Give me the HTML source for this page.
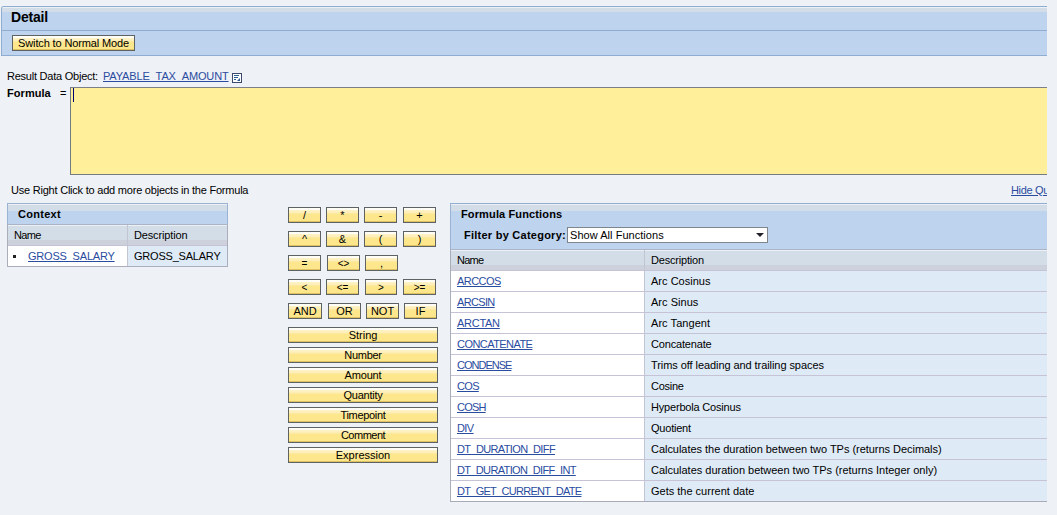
<!DOCTYPE html>
<html><head><meta charset="utf-8">
<style>
*{margin:0;padding:0;box-sizing:border-box}
html,body{width:1057px;height:515px;overflow:hidden;background:#eef1f6;font-family:"Liberation Sans",sans-serif;font-size:11px;line-height:13px;color:#000}
.a{position:absolute;white-space:nowrap}
.lnk{color:#2a4c9f;text-decoration:underline}
.b{font-weight:bold}
.box{position:absolute}
#detail{position:absolute;left:1px;top:6px;width:1046px;height:50px;border:1px solid #8eadd0;border-right:none;border-radius:3px 0 0 0;background:#bed3ee;overflow:hidden}
#detail .strip{position:absolute;left:0;top:0;right:0;height:5px;background:#d3dde8;border-top:1px solid #edf1f6}
#detail .sep{position:absolute;left:0;top:23px;right:0;height:1px;background:#8eadd0}
.btn{position:absolute;border:1px solid #5f6262;background:linear-gradient(#fffef6 0,#fffef6 2px,#fef2c6 2px,#fef0be 4px,#fdebb0 5px,#fde78e 6px,#fde68a 13px,#dcc262 13px,#dcc262 14px);text-align:center;font-size:11px;line-height:14px;height:16px;white-space:nowrap}
#formula{position:absolute;left:70px;top:87px;width:977px;height:88px;background:#ffee9a;border-top:1px solid #7a7f88;border-left:1px solid #737a82;border-bottom:1px solid #737a82}
.pstrip{position:absolute;left:0;right:0;top:0;height:7px;background:#d3dde8}
.colh{position:absolute;background:#d3dde8}
.colhd{position:absolute;background:#ccd1dc}
.vl{position:absolute;width:1px;background:#c2c6d3}
.hl{position:absolute;height:1px;background:#c6c3d6}
</style></head><body>

<div id="detail"><div class="strip"></div><div class="sep"></div></div>
<div class="a b" style="left:11px;top:9px;font-size:14px;line-height:16px;letter-spacing:-0.207px">Detail</div>
<div class="btn" style="left:12px;top:35px;width:123px;letter-spacing:-0.139px">Switch to Normal Mode</div>
<div class="a" style="left:7px;top:70px;letter-spacing:-0.234px">Result Data Object:</div>
<div class="a lnk" style="left:103px;top:70px;letter-spacing:-0.148px">PAYABLE_TAX_AMOUNT</div>
<svg class="a" style="left:232px;top:73px" width="10" height="10" viewBox="0 0 10 10"><rect x="0.5" y="0.5" width="9" height="9" fill="#fff" stroke="#3c4a70"/><rect x="2" y="2" width="5" height="1" fill="#2f6094"/><rect x="2" y="4" width="4" height="1" fill="#2f6094"/><rect x="2" y="6" width="2" height="1" fill="#2f6094"/><path d="M5 8H8V5z" fill="#2a5a90"/></svg>
<div class="a b" style="left:7px;top:87px;letter-spacing:0.054px">Formula</div>
<div class="a" style="left:60px;top:87px">=</div>
<div id="formula"></div>
<div class="a" style="left:73px;top:88px;width:1px;height:14px;background:#000070"></div>
<div class="a" style="left:11px;top:184px;letter-spacing:-0.219px">Use Right Click to add more objects in the Formula</div>
<div class="a" style="left:1011px;top:184px;width:36px;height:14px;overflow:hidden"><span class="lnk" style="letter-spacing:-0.35px">Hide Quick Help</span></div>

<div class="box" style="left:7px;top:203px;width:221px;height:64px;background:#bed3ee">
  <div class="box" style="left:0;top:0;width:221px;height:1px;background:#9ab3d2"></div>
  <div class="box" style="left:0;top:1px;width:1px;height:21px;background:#9ab3d2"></div>
  <div class="box" style="left:220px;top:1px;width:1px;height:21px;background:#9ab3d2"></div>
  <div class="box" style="left:1px;right:1px;top:1px;height:1px;background:#edf1f6"></div>
  <div class="box" style="left:1px;right:1px;top:2px;height:6px;background:#d3dde8"></div>
  <div class="box" style="left:0;right:0;top:21px;height:1px;background:#aab4c6"></div>
  <div class="box" style="left:1px;right:1px;top:22px;height:1px;background:#edf1f6"></div>
  <div class="colh" style="left:1px;right:1px;top:23px;height:14px"></div>
  <div class="colhd" style="left:1px;right:1px;top:37px;height:5px"></div>
  <div class="box" style="left:1px;width:119px;top:43px;height:20px;background:#fff"></div>
  <div class="box" style="left:121px;right:1px;top:43px;height:20px;background:#deeaf6"></div>
  <div class="hl" style="left:1px;right:1px;top:42px"></div>
  <div class="vl" style="left:120px;top:22px;height:41px"></div>
  <div class="box" style="left:0;top:22px;width:1px;height:42px;background:#aaaebb"></div>
  <div class="box" style="left:220px;top:22px;width:1px;height:42px;background:#aaaebb"></div>
  <div class="box" style="left:0;top:63px;width:221px;height:1px;background:#aaaebb"></div>
</div>
<div class="a b" style="left:18px;top:208px;letter-spacing:0.286px">Context</div>
<div class="a" style="left:14px;top:229px;letter-spacing:-0.675px">Name</div>
<div class="a" style="left:134px;top:229px;letter-spacing:-0.150px">Description</div>
<div class="a" style="left:13px;top:255px;width:3px;height:3px;background:#222"></div>
<div class="a lnk" style="left:28px;top:250px;letter-spacing:-0.205px">GROSS_SALARY</div>
<div class="a" style="left:134px;top:250px;letter-spacing:-0.211px">GROSS_SALARY</div>

<div class="btn" style="left:288px;top:207px;width:33px">/</div>
<div class="btn" style="left:326px;top:207px;width:33px">*</div>
<div class="btn" style="left:364px;top:207px;width:33px">-</div>
<div class="btn" style="left:403px;top:207px;width:33px">+</div>
<div class="btn" style="left:288px;top:231px;width:33px">^</div>
<div class="btn" style="left:326px;top:231px;width:33px">&amp;</div>
<div class="btn" style="left:364px;top:231px;width:33px">(</div>
<div class="btn" style="left:403px;top:231px;width:33px">)</div>
<div class="btn" style="left:288px;top:255px;width:33px;font-size:10px;padding-top:1px">=</div>
<div class="btn" style="left:327px;top:255px;width:33px;font-size:10px;padding-top:1px">&lt;&gt;</div>
<div class="btn" style="left:365px;top:255px;width:33px">,</div>
<div class="btn" style="left:288px;top:279px;width:33px;font-size:10px;padding-top:1px">&lt;</div>
<div class="btn" style="left:326px;top:279px;width:33px;font-size:10px;padding-top:1px">&lt;=</div>
<div class="btn" style="left:365px;top:279px;width:32px;font-size:10px;padding-top:1px">&gt;</div>
<div class="btn" style="left:403px;top:279px;width:33px;font-size:10px;padding-top:1px">&gt;=</div>
<div class="btn" style="left:288px;top:303px;width:34px">AND</div>
<div class="btn" style="left:328px;top:303px;width:33px">OR</div>
<div class="btn" style="left:366px;top:303px;width:33px">NOT</div>
<div class="btn" style="left:404px;top:303px;width:33px">IF</div>
<div class="btn" style="left:288px;top:327px;width:150px;letter-spacing:0px">String</div>
<div class="btn" style="left:288px;top:347px;width:150px;letter-spacing:-0.3px">Number</div>
<div class="btn" style="left:288px;top:367px;width:150px;letter-spacing:-0.15px">Amount</div>
<div class="btn" style="left:288px;top:387px;width:150px;letter-spacing:-0.25px">Quantity</div>
<div class="btn" style="left:288px;top:407px;width:150px;letter-spacing:-0.3px">Timepoint</div>
<div class="btn" style="left:288px;top:427px;width:150px;letter-spacing:-0.5px">Comment</div>
<div class="btn" style="left:288px;top:447px;width:150px;letter-spacing:0px">Expression</div>
<div class="box" style="left:450px;top:203px;width:597px;height:299px;background:#bed3ee">
  <div class="box" style="left:0;top:0;right:0;height:1px;background:#8eadd0"></div>
  <div class="box" style="left:0;top:1px;width:1px;height:46px;background:#9ab3d2"></div>
  <div class="box" style="left:1px;right:0;top:1px;height:1px;background:#edf1f6"></div>
  <div class="box" style="left:1px;right:0;top:2px;height:6px;background:#d3dde8"></div>
  <div class="box" style="left:0;right:0;top:46px;height:1px;background:#aab4c6"></div>
  <div class="box" style="left:1px;right:0;top:47px;height:1px;background:#edf1f6"></div>
  <div class="colh" style="left:1px;right:0;top:48px;height:14px"></div>
  <div class="colhd" style="left:1px;right:0;top:62px;height:5px"></div>
  <div class="box" style="left:1px;width:193px;top:67px;height:231px;background:#fff"></div>
  <div class="box" style="left:195px;right:0;top:67px;height:231px;background:#deeaf6"></div>
  <div class="vl" style="left:194px;top:47px;height:251px"></div>
  <div class="box" style="left:0;top:47px;width:1px;height:252px;background:#aaaebb"></div>

  <div class="hl" style="left:1px;right:0;top:67px"></div>
  <div class="hl" style="left:1px;right:0;top:88px"></div>
  <div class="hl" style="left:1px;right:0;top:109px"></div>
  <div class="hl" style="left:1px;right:0;top:130px"></div>
  <div class="hl" style="left:1px;right:0;top:151px"></div>
  <div class="hl" style="left:1px;right:0;top:172px"></div>
  <div class="hl" style="left:1px;right:0;top:193px"></div>
  <div class="hl" style="left:1px;right:0;top:214px"></div>
  <div class="hl" style="left:1px;right:0;top:235px"></div>
  <div class="hl" style="left:1px;right:0;top:256px"></div>
  <div class="hl" style="left:1px;right:0;top:277px"></div>
  <div class="box" style="left:0;right:0;top:298px;height:1px;background:#a9acb8"></div>
</div>
<div class="a b" style="left:461px;top:208px;letter-spacing:0.132px">Formula Functions</div>
<div class="a b" style="left:464px;top:229px;letter-spacing:0.249px">Filter by Category:</div>
<div class="box" style="left:567px;top:227px;width:201px;height:16px;background:#fff;border:1px solid #7f858c"></div>
<div class="a" style="left:570px;top:229px;letter-spacing:0.044px">Show All Functions</div>
<svg class="a" style="left:756px;top:233px" width="8" height="4"><path d="M0 0h8L4 4z" fill="#22222e"/></svg>
<div class="a" style="left:457px;top:254px;letter-spacing:-0.741px">Name</div>
<div class="a" style="left:651px;top:254px;letter-spacing:-0.190px">Description</div>

<div class="a lnk" style="left:457px;top:275px;letter-spacing:-0.544px">ARCCOS</div><div class="a" style="left:651px;top:275px;letter-spacing:0.020px">Arc Cosinus</div>
<div class="a lnk" style="left:457px;top:296px;letter-spacing:-0.660px">ARCSIN</div><div class="a" style="left:651px;top:296px;letter-spacing:0.028px">Arc Sinus</div>
<div class="a lnk" style="left:457px;top:317px;letter-spacing:-0.268px">ARCTAN</div><div class="a" style="left:651px;top:317px;letter-spacing:0.056px">Arc Tangent</div>
<div class="a lnk" style="left:457px;top:338px;letter-spacing:-0.553px">CONCATENATE</div><div class="a" style="left:651px;top:338px;letter-spacing:-0.166px">Concatenate</div>
<div class="a lnk" style="left:457px;top:359px;letter-spacing:-0.993px">CONDENSE</div><div class="a" style="left:651px;top:359px;letter-spacing:-0.071px">Trims off leading and trailing spaces</div>
<div class="a lnk" style="left:457px;top:380px;letter-spacing:-0.679px">COS</div><div class="a" style="left:651px;top:380px;letter-spacing:-0.265px">Cosine</div>
<div class="a lnk" style="left:457px;top:401px;letter-spacing:-0.795px">COSH</div><div class="a" style="left:651px;top:401px;letter-spacing:-0.189px">Hyperbola Cosinus</div>
<div class="a lnk" style="left:457px;top:422px;letter-spacing:-0.579px">DIV</div><div class="a" style="left:651px;top:422px;letter-spacing:-0.218px">Quotient</div>
<div class="a lnk" style="left:457px;top:443px;letter-spacing:-0.623px">DT_DURATION_DIFF</div><div class="a" style="left:651px;top:443px;letter-spacing:-0.035px">Calculates the duration between two TPs (returns Decimals)</div>
<div class="a lnk" style="left:457px;top:464px;letter-spacing:-0.650px">DT_DURATION_DIFF_INT</div><div class="a" style="left:651px;top:464px;letter-spacing:-0.009px">Calculates duration between two TPs (returns Integer only)</div>
<div class="a lnk" style="left:457px;top:485px;letter-spacing:-0.712px">DT_GET_CURRENT_DATE</div><div class="a" style="left:651px;top:485px;letter-spacing:-0.001px">Gets the current date</div>
</body></html>
